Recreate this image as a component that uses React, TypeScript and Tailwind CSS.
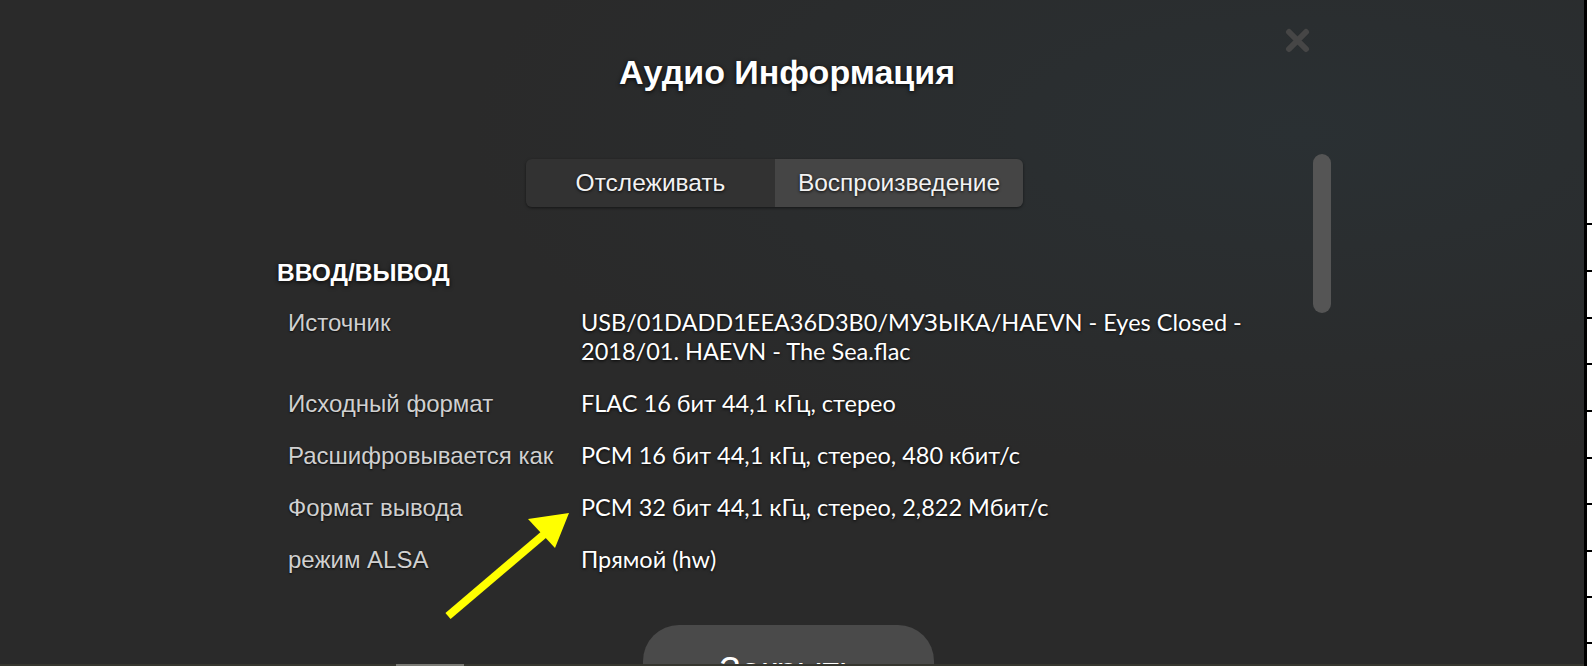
import React from 'react';

const rows: { label: string; value: string }[] = [
  {
    label: 'Источник',
    value: 'USB/01DADD1EEA36D3B0/МУЗЫКА/HAEVN - Eyes Closed - 2018/01. HAEVN - The Sea.flac',
  },
  { label: 'Исходный формат', value: 'FLAC 16 бит 44,1 кГц, стерео' },
  { label: 'Расшифровывается как', value: 'PCM 16 бит 44,1 кГц, стерео, 480 кбит/с' },
  { label: 'Формат вывода', value: 'PCM 32 бит 44,1 кГц, стерео, 2,822 Мбит/с' },
  { label: 'режим ALSA', value: 'Прямой (hw)' },
];

const ticks = [223, 270, 317, 363, 410, 457, 503, 550, 596, 642];

export default function App() {
  return (
    <div className="w-[1592px] h-[666px] overflow-hidden flex bg-[#2a2a2a] font-['Liberation_Sans',Arial,sans-serif]">
      <div className="relative flex-1 flex flex-col items-start overflow-hidden bg-[radial-gradient(ellipse_at_82%_20%,#2a3033_0%,#2a2a2a_45%)]">
        {/* close */}
        <svg className="absolute left-[1285px] top-[28px]" width="25" height="25" viewBox="0 0 25 25">
          <path d="M4 4 L21 21 M21 4 L4 21" stroke="#464646" strokeWidth="6" strokeLinecap="round" />
        </svg>

        {/* scrollbar */}
        <div className="absolute left-[1313px] top-[154px] w-[18px] h-[159px] rounded-full bg-[#555555]" />

        <h1 className="shrink-0 mt-[52px] w-full pr-[10px] text-center text-[34px] leading-[40px] font-bold text-white [text-shadow:0_1px_4px_rgba(0,0,0,0.9)]">
          Аудио Информация
        </h1>

        <div className="shrink-0 mt-[67px] ml-[526px] flex h-[48px] rounded-[6px] overflow-hidden shadow-[0_1px_3px_rgba(0,0,0,0.5)]">
          <div className="w-[249px] flex items-center justify-center bg-[#323232] text-[24.5px] text-[#f2f2f2] [text-shadow:0_1px_3px_rgba(0,0,0,0.9)]">
            Отслеживать
          </div>
          <div className="w-[248px] flex items-center justify-center bg-[#454545] text-[24.5px] text-[#f2f2f2] [text-shadow:0_1px_3px_rgba(0,0,0,0.9)]">
            Воспроизведение
          </div>
        </div>

        <div className="shrink-0 mt-[52px] ml-[277px] flex flex-col">
          <h2 className="text-[24.5px] leading-[28px] font-bold text-white [text-shadow:0_1px_4px_rgba(0,0,0,0.9)]">
            ВВОД/ВЫВОД
          </h2>
          <div className="mt-[21px] ml-[11px] grid grid-cols-[293px_700px] gap-y-[23px]">
            {rows.map((row) => (
              <React.Fragment key={row.label}>
                <div className="text-[24px] leading-[29px] text-[#d0d0d0] [text-shadow:0_1px_2px_rgba(0,0,0,0.8)]">
                  {row.label}
                </div>
                <div className="text-[23.5px] leading-[29px] text-white font-['Lato','Liberation_Sans_Narrow',sans-serif] [text-shadow:0_1px_3px_rgba(0,0,0,0.9)]">
                  {row.value}
                </div>
              </React.Fragment>
            ))}
          </div>
        </div>

        <div className="shrink-0 mt-[51px] ml-[643px] w-[291px] h-[80px] rounded-[36px] bg-[#4a4a4a] flex justify-center pt-[25px] text-[36px] leading-[42px] text-white">
          Закрыть
        </div>

        {/* annotation arrow */}
        <svg className="absolute left-[430px] top-[500px]" width="160" height="130" viewBox="430 500 160 130">
          <line x1="448" y1="616" x2="548" y2="531" stroke="#ffff00" strokeWidth="8" />
          <polygon points="569,513 528,519 555,548" fill="#ffff00" />
        </svg>

        {/* bottom edge */}
        <div className="absolute left-0 right-0 bottom-0 h-[2px] bg-[#36362f]" />
        <div className="absolute left-[396px] bottom-0 w-[68px] h-[2px] bg-[#7a7a74]" />
      </div>

      <div className="relative w-[8px] flex border-l-[3px] border-black bg-white">
        {ticks.map((y) => (
          <div key={y} className="absolute left-0 right-0 h-[2px] bg-black" style={{ top: y }} />
        ))}
      </div>
    </div>
  );
}
